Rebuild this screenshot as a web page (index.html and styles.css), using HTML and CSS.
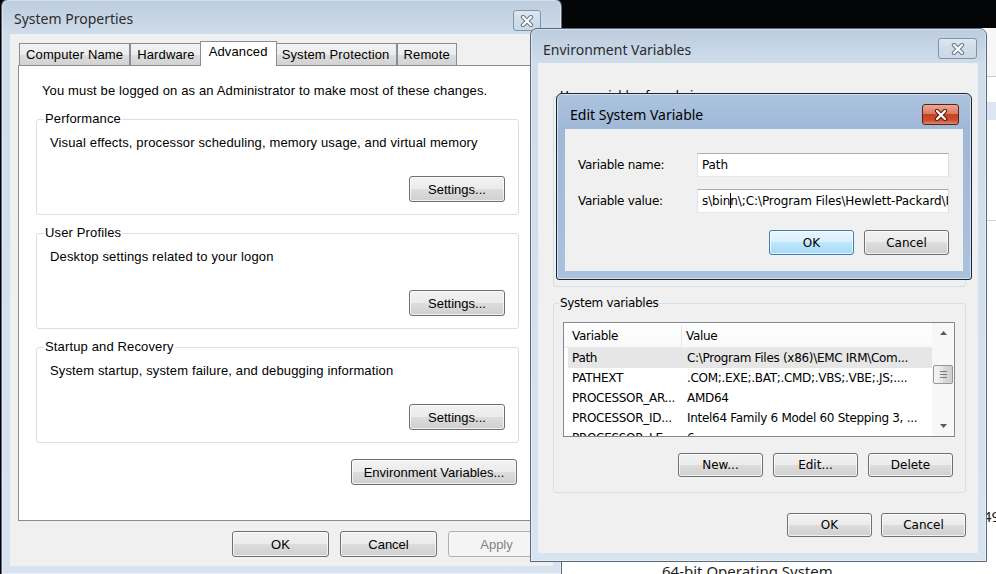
FILE: index.html
```html
<!DOCTYPE html>
<html lang="en">
<head>
  <meta charset="UTF-8" />
  <title>System Properties - Environment Variables</title>
  <link rel="stylesheet" href="styles.css">
</head>
<body>
  <!-- window in the background -->
  <div class="backdrop">
    <div class="backdrop-strip"></div>
    <span class="backdrop-num">49</span>
    <span class="backdrop-os">64-bit Operating System</span>
  </div>

  <!-- System Properties -->
  <div class="window sysprops">
    <div class="titlebar">
      <span class="title">System Properties</span>
      <span class="close">
        <svg width="14" height="12" viewBox="0 0 14 12"><path d="M3 2L11 10M11 2L3 10" stroke="#6b7a8c" stroke-width="4.4" stroke-linecap="round"/><path d="M3 2L11 10M11 2L3 10" stroke="#fff" stroke-width="2.2" stroke-linecap="round"/></svg>
      </span>
    </div>
    <div class="client">
      <div class="tabs">
        <span class="tab">Computer Name</span>
        <span class="tab">Hardware</span>
        <span class="tab selected">Advanced</span>
        <span class="tab">System Protection</span>
        <span class="tab">Remote</span>
      </div>
      <div class="tab-panel">
        <p class="note">You must be logged on as an Administrator to make most of these changes.</p>

        <fieldset class="group">
          <legend>Performance</legend>
          <p>Visual effects, processor scheduling, memory usage, and virtual memory</p>
          <div class="btn-row"><button class="btn">Settings...</button></div>
        </fieldset>

        <fieldset class="group">
          <legend>User Profiles</legend>
          <p>Desktop settings related to your logon</p>
          <div class="btn-row"><button class="btn">Settings...</button></div>
        </fieldset>

        <fieldset class="group">
          <legend>Startup and Recovery</legend>
          <p>System startup, system failure, and debugging information</p>
          <div class="btn-row"><button class="btn">Settings...</button></div>
        </fieldset>

        <div class="btn-row env-row"><button class="btn btn-env">Environment Variables...</button></div>
      </div>
      <div class="dlg-buttons">
        <button class="btn">OK</button>
        <button class="btn">Cancel</button>
        <button class="btn" disabled>Apply</button>
      </div>
    </div>
  </div>

  <!-- Environment Variables -->
  <div class="window envvars">
    <div class="titlebar">
      <span class="title">Environment Variables</span>
      <span class="close">
        <svg width="14" height="12" viewBox="0 0 14 12"><path d="M3 2L11 10M11 2L3 10" stroke="#6b7a8c" stroke-width="4.4" stroke-linecap="round"/><path d="M3 2L11 10M11 2L3 10" stroke="#fff" stroke-width="2.2" stroke-linecap="round"/></svg>
      </span>
    </div>
    <div class="client">
      <fieldset class="group user-group">
        <legend>User variables for admin</legend>
      </fieldset>

      <fieldset class="group sys-group">
        <legend>System variables</legend>
        <div class="listbox">
          <div class="lv">
            <div class="lv-head">
              <span class="c1">Variable</span>
              <span class="c2">Value</span>
            </div>
            <div class="lv-row selected"><span class="c1">Path</span><span class="c2">C:\Program Files (x86)\EMC IRM\Com...</span></div>
            <div class="lv-row"><span class="c1">PATHEXT</span><span class="c2">.COM;.EXE;.BAT;.CMD;.VBS;.VBE;.JS;....</span></div>
            <div class="lv-row"><span class="c1">PROCESSOR_AR...</span><span class="c2">AMD64</span></div>
            <div class="lv-row"><span class="c1">PROCESSOR_ID...</span><span class="c2">Intel64 Family 6 Model 60 Stepping 3, ...</span></div>
            <div class="lv-row"><span class="c1">PROCESSOR_LE...</span><span class="c2">6</span></div>
          </div>
          <div class="scrollbar">
            <span class="sb-arrow"><svg width="7" height="4" viewBox="0 0 7 4"><path d="M0 4L3.5 0L7 4Z" fill="#5a5a5a"/></svg></span>
            <span class="sb-track">
              <span class="sb-thumb"><i></i><i></i><i></i></span>
            </span>
            <span class="sb-arrow"><svg width="7" height="4" viewBox="0 0 7 4"><path d="M0 0L3.5 4L7 0Z" fill="#5a5a5a"/></svg></span>
          </div>
        </div>
        <div class="btn-row">
          <button class="btn">New...</button>
          <button class="btn">Edit...</button>
          <button class="btn">Delete</button>
        </div>
      </fieldset>

      <div class="btn-row bottom-row">
        <button class="btn">OK</button>
        <button class="btn">Cancel</button>
      </div>
    </div>
  </div>

  <!-- Edit System Variable -->
  <div class="window editvar">
    <div class="titlebar">
      <span class="title">Edit System Variable</span>
      <span class="close red">
        <svg width="14" height="12" viewBox="0 0 14 12"><path d="M3 2L11 10M11 2L3 10" stroke="#5b1d12" stroke-width="4.4" stroke-linecap="round"/><path d="M3 2L11 10M11 2L3 10" stroke="#fff" stroke-width="2.2" stroke-linecap="round"/></svg>
      </span>
    </div>
    <div class="client">
      <div class="field">
        <span class="label">Variable name:</span>
        <div class="textbox">Path</div>
      </div>
      <div class="field">
        <span class="label">Variable value:</span>
        <div class="textbox">s\bin<span class="caret"></span>n\;C:\Program Files\Hewlett-Packard\IMP\bin</div>
      </div>
      <div class="btn-row">
        <button class="btn btn-default">OK</button>
        <button class="btn">Cancel</button>
      </div>
    </div>
  </div>
</body>
</html>
```

FILE: styles.css
```css
/* desktop */
* {
  box-sizing: border-box;
}

body {
  margin: 0;
  width: 996px;
  height: 574px;
  overflow: hidden;
  position: relative;
  background: #040507;
  font-family: "Liberation Sans", Arial, sans-serif;
  font-size: 13px;
  color: #000;
}

.backdrop {
  position: absolute;
  left: 562px;
  top: 28px;
  right: 0;
  bottom: 0;
  background: #fff;
  font-family: "Noto Sans", sans-serif;
  font-size: 15px;
  line-height: 20px;
  color: #1e1e1e;
}

.backdrop-strip {
  position: absolute;
  left: 425px;
  top: 0;
  bottom: 0;
  width: 9px;
  background: linear-gradient(to bottom,
    #f7f7f7 0, #f7f7f7 48px, #c9c9c9 48px, #c9c9c9 49px,
    #fff 49px, #fff 74px, #dce7f3 74px, #dce7f3 92px,
    #fff 92px, #fff 192px, #d3d3d3 192px, #d3d3d3 193px, #fff 193px);
}

.backdrop-num {
  position: absolute;
  left: 421px;
  top: 478px;
}

.backdrop-os {
  position: absolute;
  left: 100px;
  top: 533px;
}

/* window frames */
.window {
  position: absolute;
  display: flex;
  flex-direction: column;
  border: 1px solid #5b6a7b;
  border-radius: 7px 7px 0 0;
  background: linear-gradient(#bccddf, #cfdcea 34px, #d7e3f0);
  box-shadow: inset 0 0 0 1px rgba(255, 255, 255, 0.4);
}

.titlebar {
  display: flex;
  justify-content: space-between;
  align-items: flex-start;
  flex: none;
}

.title {
  font-family: "Noto Sans", sans-serif;
  font-size: 14px;
  line-height: 20px;
  color: #2c2c2c;
}

.close {
  display: flex;
  align-items: center;
  justify-content: center;
  height: 21px;
  border: 1px solid #8093a9;
  border-radius: 3px;
  background: linear-gradient(rgba(255, 255, 255, 0.5), rgba(255, 255, 255, 0.15) 50%, rgba(200, 214, 230, 0.3));
}

.close.red {
  border-color: #5e2016;
  background: linear-gradient(#eba893, #dc7b62 45%, #c5411f 50%, #c9502f 80%, #e0866a);
}

.client {
  flex: 1;
  background: #f0f0f0;
}

/* buttons */
.btn {
  height: 26px;
  min-width: 96px;
  padding: 0 10px;
  border: 1px solid #707070;
  border-radius: 3px;
  background: linear-gradient(#f2f2f2, #ebebeb 50%, #dddddd 50%, #cfcfcf);
  box-shadow: inset 0 0 0 1px rgba(255, 255, 255, 0.7);
  font: inherit;
  color: #000;
}

.btn:disabled {
  border-color: #adb2b5;
  background: #f4f4f4;
  box-shadow: none;
  color: #838383;
}

.btn-default {
  border-color: #3c7fb1;
  background: linear-gradient(#eaf6fd, #d9f0fc 50%, #bee6fd 50%, #a7d9f5);
}

.btn-row {
  display: flex;
  justify-content: flex-end;
}

.group {
  margin: 0;
  border: 1px solid #d5dfe5;
  border-radius: 3px;
  min-width: 0;
}

.group legend {
  padding: 0 1px;
  line-height: 16px;
}

.group p {
  margin: 0;
  line-height: 16px;
}

/* System Properties */
.sysprops {
  left: 1px;
  top: -1px;
  width: 561px;
  height: 575px;
  padding: 0 8px 8px;
  border-bottom: 0;
}

.sysprops .titlebar {
  height: 34px;
}

.sysprops .title {
  margin: 9px 0 0 4px;
}

.sysprops .close {
  width: 28px;
  margin: 10px 12px 0 0;
}

.sysprops .client {
  padding: 7px 8px 0;
  letter-spacing: 0.14px;
}

.tabs {
  display: flex;
  align-items: flex-end;
  height: 24px;
  padding-left: 1px;
  position: relative;
  z-index: 1;
}

.tab {
  height: 22px;
  padding: 0 6px;
  line-height: 21px;
  border: 1px solid #898c95;
  border-bottom: 0;
  background: linear-gradient(#f3f3f3, #ebebeb 50%, #dddddd 50%, #d2d2d2);
  white-space: nowrap;
}

.tab.selected {
  height: 25px;
  margin: 0 -2px -1px;
  padding: 0 8px;
  line-height: 20px;
  background: #fff;
  position: relative;
  z-index: 2;
}

.tab-panel {
  height: 456px;
  padding-top: 17px;
  border: 1px solid #898c95;
  background: #fff;
}

.note {
  margin: 0 0 12px;
  padding-left: 23px;
  line-height: 16px;
}

.tab-panel .group {
  width: 483px;
  margin: 0 0 10px 17px;
  padding: 8px 13px 12px;
}

.tab-panel .group legend {
  margin-left: -6px;
}

.tab-panel .group .btn-row {
  margin-top: 25px;
}

.env-row {
  margin-top: 16px;
  padding-right: 27px;
}

.btn-env {
  width: 166px;
}

.dlg-buttons {
  display: flex;
  justify-content: flex-end;
  gap: 11px;
  margin-top: 10px;
}

.dlg-buttons .btn {
  width: 97px;
}

/* Environment Variables */
.envvars {
  left: 530px;
  top: 28px;
  width: 457px;
  height: 534px;
  padding: 0 8px 8px 7px;
  z-index: 2;
}

.envvars .titlebar,
.editvar .titlebar {
  height: 34px;
}

.envvars .title {
  margin: 11px 0 0 5px;
}

.envvars .close {
  width: 39px;
  margin: 9px 1px 0 0;
}

.envvars .client,
.editvar .client {
  font-family: "DejaVu Sans", Verdana, sans-serif;
  font-size: 12px;
  letter-spacing: -0.3px;
}

.envvars .client {
  padding: 25px 12px 0 15px;
}

.envvars .btn,
.editvar .btn {
  width: 85px;
  min-width: 85px;
  height: 24px;
  padding: 0;
}

.envvars .group legend {
  margin-left: -4px;
}

.user-group {
  height: 199px;
  padding: 0 0 0 9px;
}

.sys-group {
  margin-top: 8px;
  padding: 11px 10px 15px 9px;
}

.listbox {
  display: flex;
  height: 115px;
  border: 1px solid #828790;
  background: #fff;
}

.lv {
  flex: 1;
  overflow: hidden;
  white-space: nowrap;
}

.lv-head {
  display: flex;
  height: 25px;
  padding-top: 2px;
  line-height: 22px;
  border-bottom: 1px solid #ececec;
  background: linear-gradient(#fff, #f8f9fa);
}

.lv-head .c1 {
  width: 118px;
  padding-left: 8px;
  border-right: 1px solid #e5e5e5;
}

.lv-head .c2 {
  padding-left: 4px;
}

.lv-row {
  display: flex;
  height: 20px;
  line-height: 20px;
  margin-left: 4px;
}

.lv-row.selected {
  background: #e6e6e6;
}

.lv-row .c1 {
  width: 114px;
  padding-left: 4px;
  overflow: hidden;
}

.lv-row .c2 {
  padding-left: 5px;
}

.scrollbar {
  width: 22px;
  display: flex;
  flex-direction: column;
  background: #f7f7f7;
}

.sb-arrow {
  height: 20px;
  display: flex;
  align-items: center;
  justify-content: center;
}

.sb-track {
  flex: 1;
  padding-top: 22px;
}

.sb-thumb {
  display: flex;
  flex-direction: column;
  align-items: center;
  justify-content: center;
  gap: 2px;
  height: 19px;
  margin: 0 1px;
  border: 1px solid #979797;
  border-radius: 2px;
  background: linear-gradient(to right, #f4f4f4, #e6e6e6 50%, #d9d9d9 50%, #cfcfcf);
}

.sb-thumb i {
  width: 7px;
  height: 1px;
  background: #7a7a7a;
}

.sys-group .btn-row {
  gap: 10px;
  margin-top: 16px;
  padding-right: 2px;
}

.bottom-row {
  gap: 9px;
  margin-top: 20px;
}

/* Edit System Variable */
.editvar {
  left: 556px;
  top: 93px;
  width: 416px;
  height: 187px;
  padding: 0 8px 8px;
  z-index: 3;
  border-color: #1c2530;
  border-radius: 6px 6px 3px 3px;
  background: linear-gradient(#adc4df, #9fb8d6 35px, #a9c2de);
  box-shadow: inset 0 0 0 1px rgba(255, 255, 255, 0.5);
}

.editvar .titlebar {
  height: 35px;
}

.editvar .title {
  margin: 11px 0 0 5px;
  color: #000;
}

.editvar .close {
  width: 37px;
  margin: 10px 4px 0 0;
}

.editvar .client {
  padding: 24px 14px 0 13px;
}

.field {
  display: flex;
  align-items: center;
}

.field + .field {
  margin-top: 12px;
}

.label {
  width: 119px;
}

.textbox {
  width: 252px;
  height: 24px;
  padding: 0 4px;
  line-height: 22px;
  letter-spacing: -0.1px;
  border: 1px solid;
  border-color: #abadb3 #dbdfe6 #e3e9ef #e2e3ea;
  background: #fff;
  white-space: nowrap;
  overflow: hidden;
}

.caret {
  display: inline-block;
  width: 1px;
  height: 15px;
  margin-right: -1px;
  background: #000;
  vertical-align: -3px;
}

.editvar .btn-row {
  gap: 10px;
  margin-top: 17px;
}

.editvar .btn {
  height: 25px;
}
```
